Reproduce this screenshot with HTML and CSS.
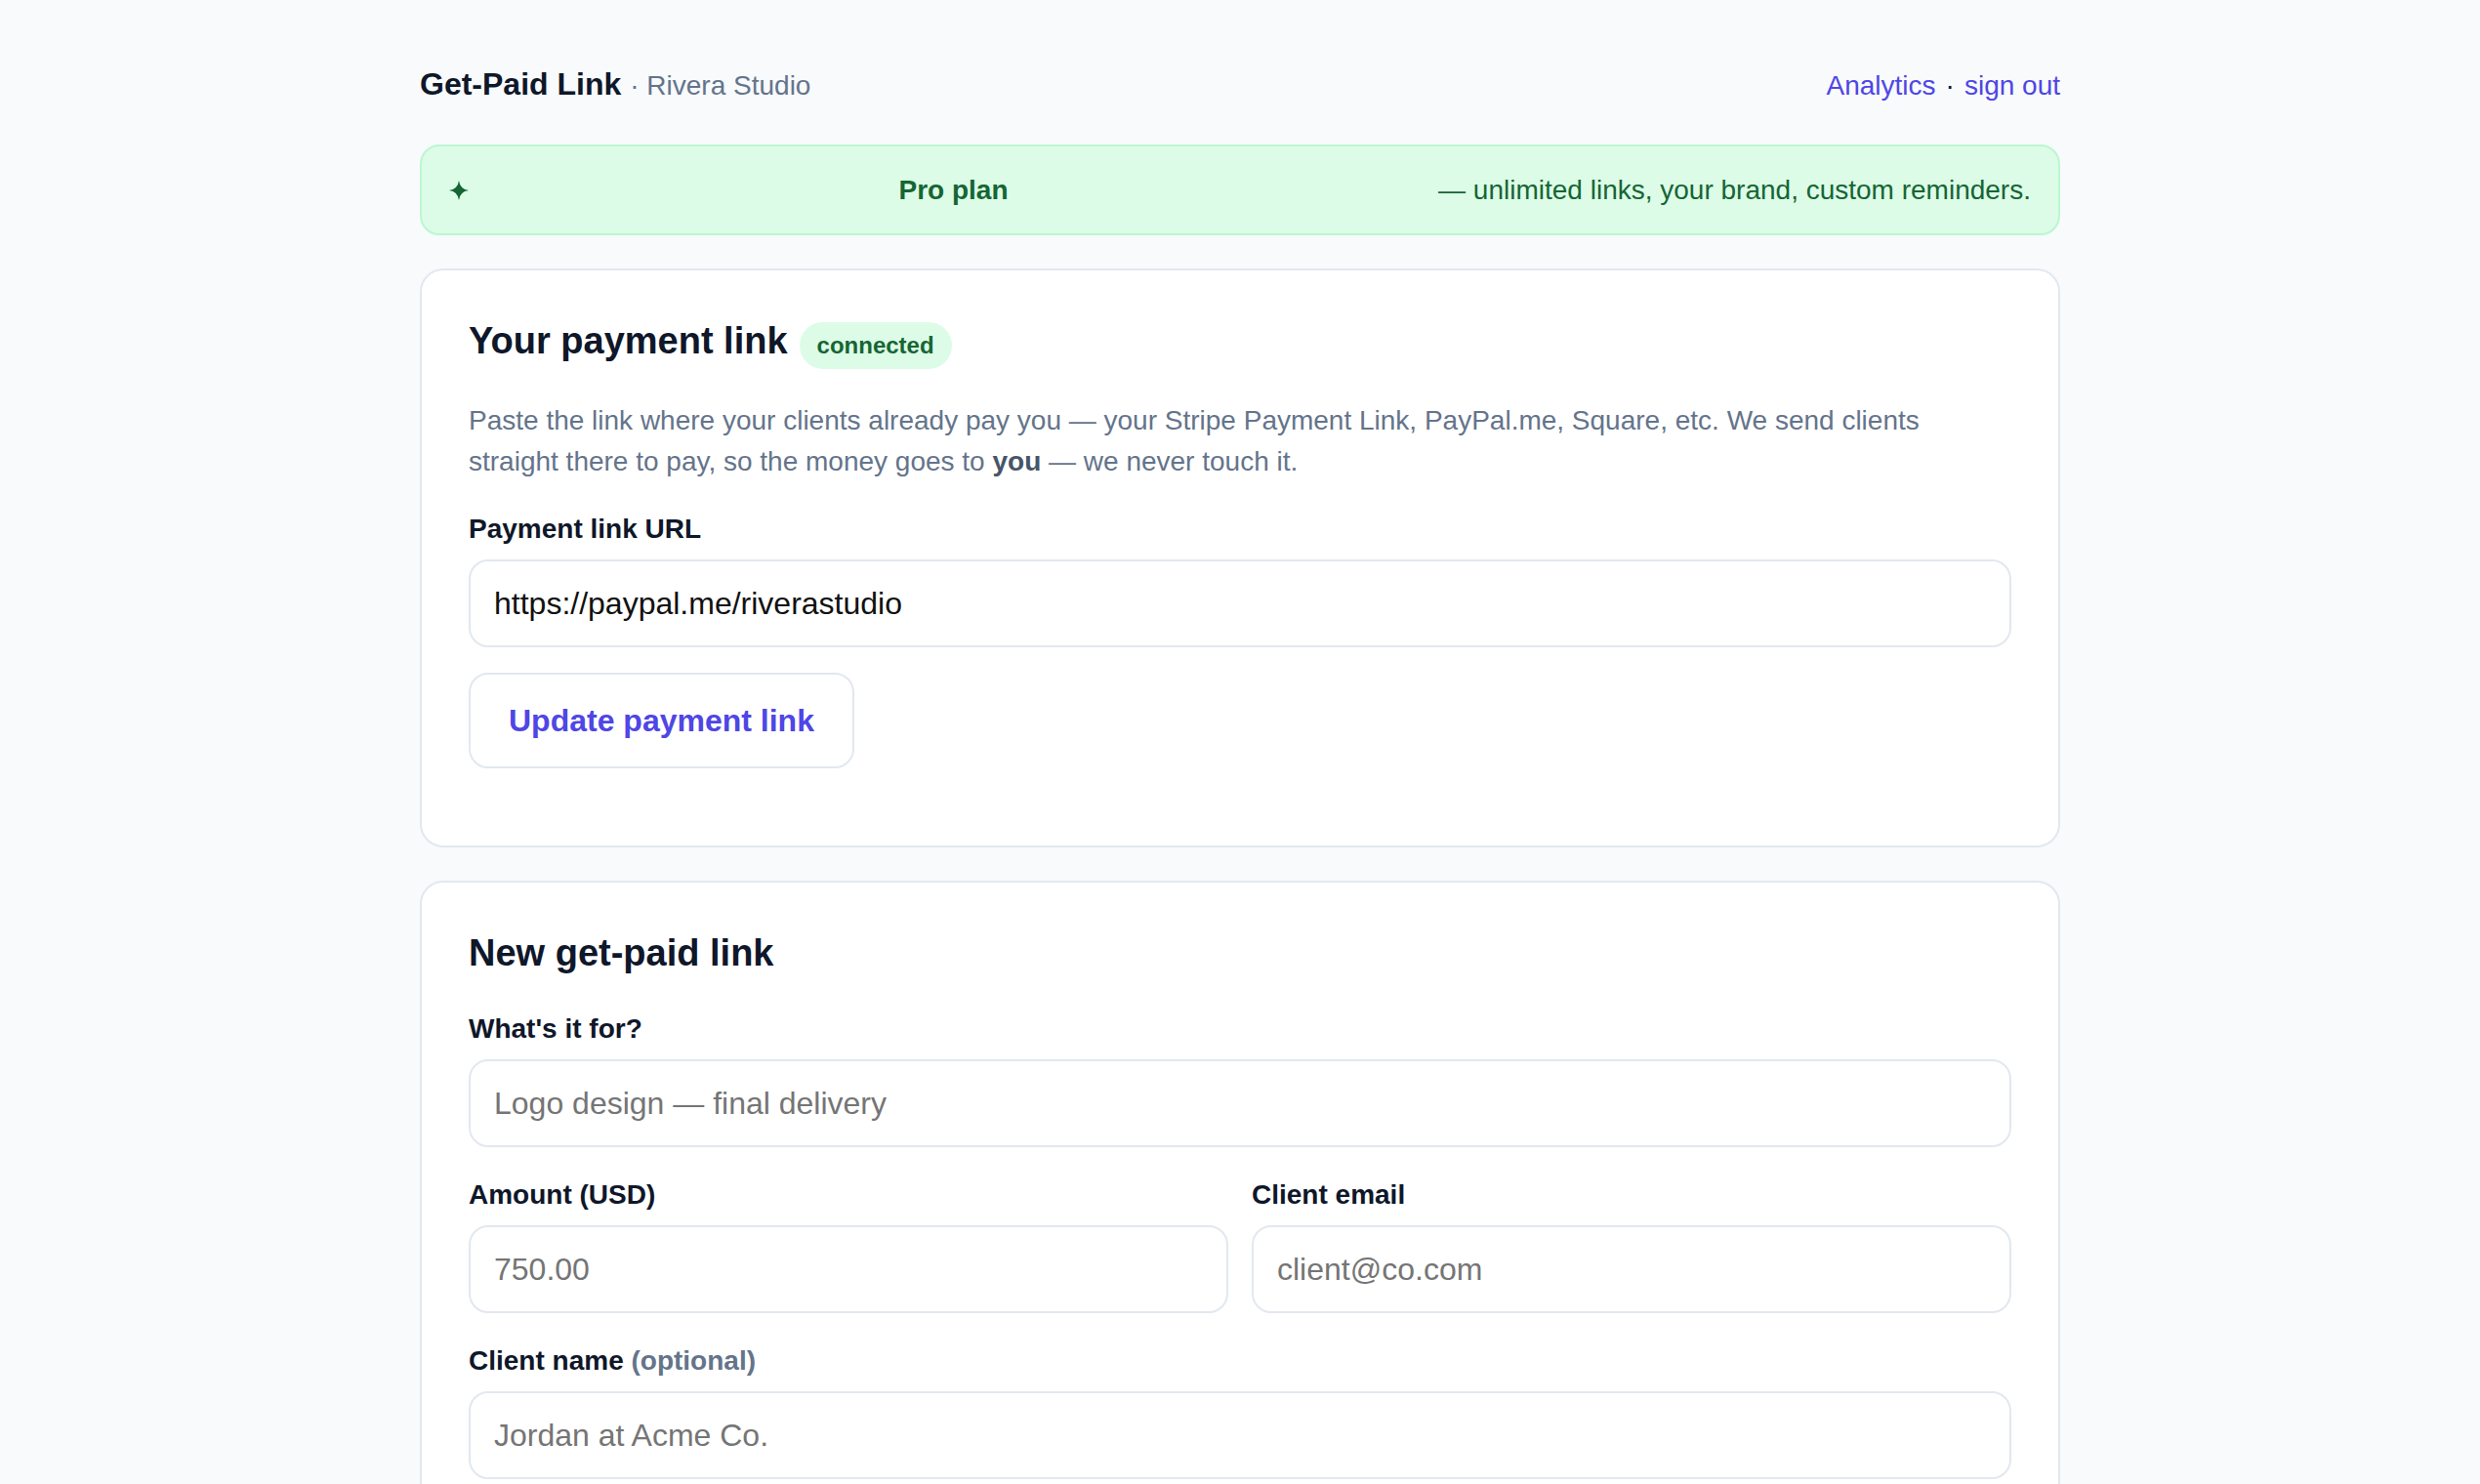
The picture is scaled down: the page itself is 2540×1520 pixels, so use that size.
FILE: index.html
```html
<!DOCTYPE html>
<html lang="en">
<head>
  <meta charset="UTF-8">
  <title>Get-Paid Link</title>
  <link rel="stylesheet" href="styles.css">
  <meta name="viewport" content="width=device-width, initial-scale=1">
</head>
<body>

  <div class="page">

    <header class="topbar">
      <div class="brand"><strong>Get-Paid Link</strong><span class="studio">· Rivera Studio</span></div>
      <nav class="links">
        <a href="#">Analytics</a><span class="sep">·</span><a href="#">sign out</a>
      </nav>
    </header>

    <div class="plan-banner">
      <svg class="spark" width="20" height="20" viewBox="0 0 20 20" aria-hidden="true">
        <path d="M10 0 Q11.2 8.8 20 10 Q11.2 11.2 10 20 Q8.8 11.2 0 10 Q8.8 8.8 10 0 Z" fill="#166534"/>
      </svg>
      <strong>Pro plan</strong>
      <span>— unlimited links, your brand, custom reminders.</span>
    </div>

    <section class="card">
      <h2>Your payment link<span class="badge">connected</span></h2>
      <p class="lead">Paste the link where your clients already pay you — your Stripe Payment Link, PayPal.me, Square, etc. We send clients straight there to pay, so the money goes to <b>you</b> — we never touch it.</p>

      <form class="payment-form" onsubmit="return false;">
        <div class="field">
          <label for="payurl">Payment link URL</label>
          <input type="url" id="payurl" value="https://paypal.me/riverastudio">
        </div>
        <div class="actions">
          <button type="submit" class="btn-outline">Update payment link</button>
        </div>
      </form>
    </section>

    <section class="card">
      <h2>New get-paid link</h2>

      <form class="new-link-form" onsubmit="return false;">
        <div class="field">
          <label for="purpose">What's it for?</label>
          <input type="text" id="purpose" placeholder="Logo design — final delivery">
        </div>

        <div class="field-row">
          <div class="field">
            <label for="amount">Amount (USD)</label>
            <input type="text" id="amount" placeholder="750.00">
          </div>
          <div class="field">
            <label for="email">Client email</label>
            <input type="email" id="email" placeholder="client@co.com">
          </div>
        </div>

        <div class="field">
          <label for="clientname">Client name <span class="optional">(optional)</span></label>
          <input type="text" id="clientname" placeholder="Jordan at Acme Co.">
        </div>
      </form>
    </section>

  </div>

</body>
</html>
```

FILE: styles.css
```css
* {
  box-sizing: border-box;
}
body {
  margin: 0;
  background: #f8fafc;
  color: #0f172a;
  font-family: "Liberation Sans", Arial, sans-serif;
}

.page {
  max-width: 1680px;
  margin: 0 auto;
  padding-top: 67px;
}

/* top bar */
.topbar {
  display: flex;
  justify-content: space-between;
  align-items: baseline;
  margin-bottom: 37px;
}
.brand {
  line-height: 38px;
}
.brand strong {
  font-size: 32px;
}
.studio {
  margin-left: 9px;
  font-size: 28px;
  color: #64748b;
}
.links {
  font-size: 28px;
}
.links a {
  color: #4f46e5;
  text-decoration: none;
}
.links .sep {
  margin: 0 10px;
  color: #0f172a;
}

/* pro plan banner */
.plan-banner {
  display: flex;
  justify-content: space-between;
  align-items: center;
  padding: 23px 28px;
  background: #dcfce7;
  border: 2px solid #bbf7d0;
  border-radius: 20px;
  color: #166534;
  font-size: 28px;
  line-height: 43px;
  margin-bottom: 34px;
}
.spark {
  display: block;
}

/* cards */
.card {
  background: #fff;
  border: 2px solid #e2e8f0;
  border-radius: 24px;
  padding: 48px;
  margin-bottom: 34px;
}
.card h2 {
  margin: 0 0 32px;
  font-size: 38px;
  line-height: 1.3;
}
.badge {
  display: inline-block;
  margin-left: 12px;
  padding: 6px 18px;
  line-height: 36px;
  font-size: 24px;
  font-weight: bold;
  color: #166534;
  background: #dcfce7;
  border-radius: 999px;
}
.lead {
  margin: 0 0 27px;
  font-size: 28px;
  line-height: 1.5;
  color: #64748b;
}
.lead b {
  color: #475569;
}

/* form bits */
.field label {
  display: block;
  margin-bottom: 10px;
  font-size: 28px;
  line-height: 42px;
  font-weight: bold;
}
.optional {
  color: #64748b;
}
.field input {
  display: block;
  width: 100%;
  height: 90px;
  padding: 0 24px;
  border: 2px solid #e2e8f0;
  border-radius: 20px;
  background: #fff;
  color: #111;
  font-family: inherit;
  font-size: 32px;
}
.field input::placeholder {
  color: #757575;
}
.new-link-form .field,
.new-link-form .field-row {
  margin-bottom: 28px;
}
.field-row {
  display: grid;
  grid-template-columns: 1fr 1fr;
  gap: 24px;
}
.field-row .field {
  margin-bottom: 0;
}

.actions {
  margin-top: 26px;
  padding-bottom: 31px;
}
.btn-outline {
  padding: 28px 39px;
  line-height: 38px;
  font-family: inherit;
  font-size: 32px;
  font-weight: bold;
  color: #4f46e5;
  background: #fff;
  border: 2px solid #e2e8f0;
  border-radius: 20px;
  cursor: pointer;
}
```
